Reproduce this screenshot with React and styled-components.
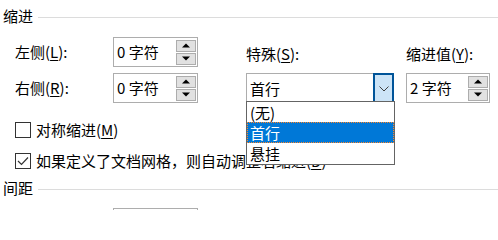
import React from "react";
import styled, { createGlobalStyle } from "styled-components";

const Global = createGlobalStyle`
  html, body {
    margin: 0;
    padding: 0;
    background: #ffffff;
  }
  body {
    width: 498px;
    height: 210px;
    overflow: hidden;
    font-family: "Noto Sans CJK SC", "Noto Sans", "Liberation Sans", sans-serif;
    font-size: 15px;
    color: #000000;
  }
`;

const Page = styled.div`
  width: 498px;
  height: 210px;
  overflow: hidden;
`;

const SectionHead = styled.div`
  display: flex;
  align-items: center;
  gap: 5px;
  height: 20px;
  line-height: 20px;
  padding-left: 3px;
  margin-top: ${(p) => p.$top}px;
  &::after {
    content: "";
    flex: 1;
    height: 1px;
    margin-top: 2px;
    background: #dcdcdc;
  }
`;

const IndentGrid = styled.div`
  display: grid;
  grid-template-columns: 98px 85px 48px 148px 12px 84px;
  grid-template-rows: 30px 30px;
  row-gap: 6px;
  margin: 11px 0 0 15px;
`;

const Label = styled.div`
  display: flex;
  align-items: center;
  line-height: 20px;
  white-space: nowrap;
  grid-column: ${(p) => p.$col};
  grid-row: ${(p) => p.$row};
  padding-top: ${(p) => (p.$low ? 3 : 0)}px;
`;

const Key = styled.span`
  text-decoration: underline;
  text-underline-offset: 2px;
`;

const SpinBox = styled.div`
  grid-column: ${(p) => p.$col};
  grid-row: ${(p) => p.$row};
  box-sizing: border-box;
  display: flex;
  align-items: center;
  height: 30px;
  border: 1px solid #adadad;
  background: #ffffff;
  padding: 0 1px 0 3px;
`;

const SpinText = styled.div`
  flex: 1;
  line-height: 20px;
  white-space: nowrap;
`;

const SpinButtons = styled.div`
  display: flex;
  flex-direction: column;
  gap: 1px;
  width: 20px;
`;

const SpinButton = styled.div`
  box-sizing: border-box;
  height: 12px;
  border: 1px solid #adadad;
  background: #e1e1e1;
  display: flex;
  align-items: center;
  justify-content: center;
`;

const Combo = styled.div`
  grid-column: 4;
  grid-row: 2;
  position: relative;
  box-sizing: border-box;
  height: 31px;
  border: 1px solid #adadad;
  background: #ffffff;
  display: flex;
  align-items: stretch;
`;

const ComboText = styled.div`
  flex: 1;
  display: flex;
  align-items: center;
  padding-left: 3px;
  line-height: 20px;
`;

const ComboButton = styled.div`
  box-sizing: border-box;
  width: 21px;
  margin: -1px -1px -1px 0;
  border: 2px solid #005499;
  background: #cce4f7;
  display: flex;
  align-items: center;
  justify-content: center;
`;

const DropList = styled.div`
  position: absolute;
  top: calc(100% - 2px);
  left: -1px;
  right: -2px;
  z-index: 2;
  box-sizing: border-box;
  border: 1px solid #646464;
  background: #ffffff;
  padding-bottom: 1px;
`;

const DropItem = styled.div`
  box-sizing: border-box;
  height: ${(p) => (p.$active ? 21 : 20)}px;
  line-height: 19px;
  padding-left: 2px;
  color: ${(p) => (p.$active ? "#ffffff" : "#000000")};
  background: ${(p) => (p.$active ? "#0078d7" : "transparent")};
  border: 1px ${(p) => (p.$active ? "dotted #ff8728" : "solid transparent")};
`;

const CheckRow = styled.label`
  display: flex;
  align-items: center;
  gap: 5px;
  height: 24px;
  line-height: 20px;
  margin: ${(p) => p.$top}px 0 0 15px;
  white-space: nowrap;
`;

const CheckText = styled.span`
  white-space: nowrap;
`;

const CheckBox = styled.span`
  box-sizing: border-box;
  width: 16px;
  height: 16px;
  border: 1px solid #333333;
  background: #ffffff;
  display: flex;
  align-items: center;
  justify-content: center;
`;

const Partial = styled.div`
  box-sizing: border-box;
  margin: 10px 0 0 113px;
  width: 85px;
  height: 30px;
  border: 1px solid #adadad;
  display: flex;
  justify-content: flex-end;
  padding: 1px;
`;

const PartialBtn = styled.div`
  box-sizing: border-box;
  width: 20px;
  height: 12px;
  border: 1px solid #adadad;
  background: #e1e1e1;
`;

const Up = () => (
  <svg width="8" height="5" viewBox="0 0 8 5">
    <path d="M0 4.5 L4 0.5 L8 4.5 Z" fill="#000" />
  </svg>
);

const Down = () => (
  <svg width="8" height="5" viewBox="0 0 8 5">
    <path d="M0 0.5 L4 4.5 L8 0.5 Z" fill="#000" />
  </svg>
);

const Chevron = () => (
  <svg width="10" height="6" viewBox="0 0 10 6">
    <path d="M0.5 0.5 L5 5 L9.5 0.5" fill="none" stroke="#404040" strokeWidth="1" />
  </svg>
);

const Tick = () => (
  <svg width="12" height="10" viewBox="0 0 12 10">
    <path d="M1 5 L4.5 8.5 L11 1.5" fill="none" stroke="#333" strokeWidth="1.2" />
  </svg>
);

const Spinner = ({ col, row, value }) => (
  <SpinBox $col={col} $row={row}>
    <SpinText>{value}</SpinText>
    <SpinButtons>
      <SpinButton><Up /></SpinButton>
      <SpinButton><Down /></SpinButton>
    </SpinButtons>
  </SpinBox>
);

export default function App() {
  return (
    <Page>
      <Global />
      <SectionHead $top={6}>缩进</SectionHead>

      <IndentGrid>
        <Label $col={1} $row={1}><span>左侧(<Key>L</Key>):</span></Label>
        <Spinner col={2} row={1} value="0 字符" />
        <Label $col={4} $row={1} $low><span>特殊(<Key>S</Key>):</span></Label>
        <Label $col={6} $row={1} $low><span>缩进值(<Key>Y</Key>):</span></Label>

        <Label $col={1} $row={2}><span>右侧(<Key>R</Key>):</span></Label>
        <Spinner col={2} row={2} value="0 字符" />
        <Combo>
          <ComboText>首行</ComboText>
          <ComboButton><Chevron /></ComboButton>
          <DropList>
            <DropItem>(无)</DropItem>
            <DropItem $active>首行</DropItem>
            <DropItem>悬挂</DropItem>
          </DropList>
        </Combo>
        <Spinner col={6} row={2} value="2 字符" />
      </IndentGrid>

      <CheckRow $top={15}>
        <CheckBox />
        <CheckText>对称缩进(<Key>M</Key>)</CheckText>
      </CheckRow>
      <CheckRow $top={7}>
        <CheckBox><Tick /></CheckBox>
        <CheckText>如果定义了文档网格，则自动调整右缩进(<Key>D</Key>)</CheckText>
      </CheckRow>

      <SectionHead $top={5}>间距</SectionHead>
      <Partial>
        <PartialBtn />
      </Partial>
    </Page>
  );
}
